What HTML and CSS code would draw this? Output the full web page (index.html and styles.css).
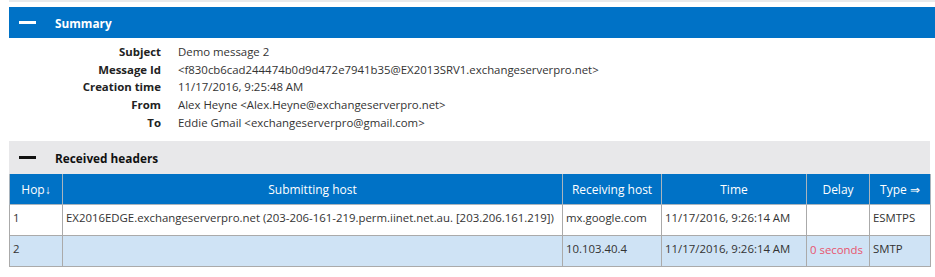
FILE: index.html
```html
<!DOCTYPE html>
<html>
<head>
<meta charset="utf-8">
<link rel="stylesheet" href="styles.css">
</head>
<body>
<div class="topline"></div>
<section class="summary">
  <div class="bar bar-blue"><span class="minus minus-white"></span><span class="bar-title">Summary</span></div>
  <div class="fields">
    <div class="label">Subject</div><div class="value">Demo message 2</div>
    <div class="label">Message Id</div><div class="value">&lt;f830cb6cad244474b0d9d472e7941b35@EX2013SRV1.exchangeserverpro.net&gt;</div>
    <div class="label">Creation time</div><div class="value">11/17/2016, 9:25:48 AM</div>
    <div class="label">From</div><div class="value">Alex Heyne &lt;Alex.Heyne@exchangeserverpro.net&gt;</div>
    <div class="label">To</div><div class="value">Eddie Gmail &lt;exchangeserverpro@gmail.com&gt;</div>
  </div>
</section>
<section class="received">
  <div class="bar bar-gray"><span class="minus minus-black"></span><span class="bar-title">Received headers</span></div>
  <table class="hops">
    <colgroup>
      <col class="c-hop"><col class="c-sub"><col class="c-recv"><col class="c-time"><col class="c-delay"><col class="c-type">
    </colgroup>
    <thead>
      <tr><th>Hop↓</th><th>Submitting host</th><th>Receiving host</th><th>Time</th><th>Delay</th><th>Type ⇒</th></tr>
    </thead>
    <tbody>
      <tr><td>1</td><td>EX2016EDGE.exchangeserverpro.net (203-206-161-219.perm.iinet.net.au. [203.206.161.219])</td><td>mx.google.com</td><td>11/17/2016, 9:26:14 AM</td><td></td><td>ESMTPS</td></tr>
      <tr class="alt"><td>2</td><td></td><td>10.103.40.4</td><td>11/17/2016, 9:26:14 AM</td><td class="delay">0 seconds</td><td>SMTP</td></tr>
    </tbody>
  </table>
</section>
</body>
</html>
```
FILE: styles.css
```css
html, body {
  margin: 0;
  padding: 0;
  background: #fff;
}
body {
  font-family: "Open Sans", "Noto Sans", sans-serif;
  font-size: 11.4px;
  color: #333;
  padding-left: 9px;
}
.topline {
  height: 2px;
  background: #e8eaec;
  margin-bottom: 5px;
}
.bar {
  height: 31px;
  display: flex;
  align-items: center;
  font-weight: bold;
  font-size: 11.8px;
}
.bar-blue {
  background: #0072c6;
  color: #fff;
}
.bar-gray {
  background: #e8e8ea;
  color: #111;
  height: 33px;
}
.minus {
  display: inline-block;
  width: 17px;
  height: 3px;
  margin-left: 10px;
  margin-right: 19px;
}
.minus-white { background: #fff; }
.minus-black { background: #111; }
.fields {
  display: grid;
  grid-template-columns: 152px 1fr;
  column-gap: 17px;
  padding-top: 5px;
  line-height: 17.7px;
  padding-bottom: 9.5px;
}
.label {
  text-align: right;
  font-weight: bold;
  color: #222;
}
.value {
  color: #333;
}
.received {
  width: 921px;
}
.hops {
  width: 921px;
  border-collapse: collapse;
  table-layout: fixed;
}
.c-hop { width: 53px; }
.c-sub { width: 500px; }
.c-recv { width: 99px; }
.c-time { width: 145px; }
.c-delay { width: 63px; }
.c-type { width: 61px; }
.hops th {
  background: #0072c6;
  color: #fff;
  font-weight: normal;
  font-size: 12px;
  height: 30px;
  padding: 0 3px;
  border: 1px solid #a9b4bd;
  border-top: none;
  text-align: center;
}
.hops td {
  height: 31px;
  padding: 5px 3px 0;
  border: 1px solid #aaaaaa;
  vertical-align: top;
  box-sizing: border-box;
  white-space: nowrap;
}
.hops tr.alt td {
  background: #cfe3f5;
}
.hops td.delay {
  color: #e8546e;
  padding-top: 6px;
}
```
